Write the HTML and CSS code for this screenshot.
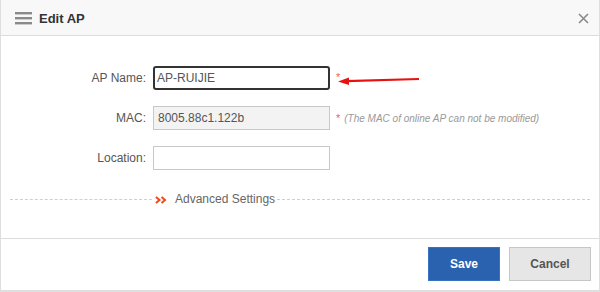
FILE: index.html
```html
<!DOCTYPE html>
<html>
<head>
<meta charset="utf-8">
<link rel="stylesheet" href="styles.css">
</head>
<body>
<div class="dialog">
  <div class="header">
    <svg class="menu" width="17" height="13" viewBox="0 0 17 13"><rect x="0" y="0" width="17" height="2.4" fill="#8a8a8a"/><rect x="0" y="5" width="17" height="2.4" fill="#8a8a8a"/><rect x="0" y="10" width="17" height="2.4" fill="#8a8a8a"/></svg>
    <span class="title">Edit AP</span>
    <svg class="close" width="11" height="11" viewBox="0 0 11 11"><path d="M1 1L10 10M10 1L1 10" stroke="#8a8a8a" stroke-width="1.6"/></svg>
  </div>
  <div class="body">
    <div class="row">
      <label class="lbl">AP Name:</label>
      <div class="input focus">AP-RUIJIE</div>
      <span class="star">*</span>
      <svg class="arrow" width="84" height="10" viewBox="0 0 84 10"><path d="M8 6.2L81 4" stroke="#e81010" stroke-width="2.2"/><path d="M0 6.5L11 2.5L11 10Z" fill="#e81010"/></svg>
    </div>
    <div class="row">
      <label class="lbl">MAC:</label>
      <div class="input disabled">8005.88c1.122b</div>
      <span class="star">*</span>
      <span class="note">(The MAC of online AP can not be modified)</span>
    </div>
    <div class="row">
      <label class="lbl">Location:</label>
      <div class="input"></div>
    </div>
    <div class="adv">
      <div class="dash left"></div>
      <div class="legend">
        <svg class="chev" width="12" height="8" viewBox="0 0 12 8"><path d="M1 1L4.5 4L1 7M6.5 1L10 4L6.5 7" stroke="#f04a1a" stroke-width="2" fill="none"/></svg>
        <span>Advanced Settings</span>
      </div>
      <div class="dash right"></div>
    </div>
  </div>
  <div class="footer">
    <button class="btn save">Save</button>
    <button class="btn cancel">Cancel</button>
  </div>
</div>
</body>
</html>
```
FILE: styles.css
```css
* { box-sizing: border-box; }
html, body { margin: 0; padding: 0; background: #fff; }
body { font-family: "Liberation Sans", Arial, sans-serif; width: 600px; height: 292px; overflow: hidden; }
.dialog {
  width: 600px;
  height: 292px;
  border: 1px solid #dedede;
  border-top: none;
  display: flex;
  flex-direction: column;
}
.header {
  height: 36px;
  background: #f8f8f8;
  border-bottom: 1px solid #dddddd;
  display: flex;
  align-items: center;
  padding: 0 10px 0 14px;
  flex: none;
}
.menu { display: block; margin-top: 1px; }
.title { font-size: 13px; font-weight: bold; color: #333; margin-left: 7px; margin-top: 1px; }
.close { margin-left: auto; margin-right: 0; margin-top: 1px; }
.body {
  position: relative;
  height: 203px;
  border-bottom: 1px solid #dddddd;
  padding-top: 30px;
  flex: none;
}
.row {
  display: flex;
  align-items: center;
  height: 24px;
  margin-bottom: 16px;
  position: relative;
}
.lbl {
  width: 145px;
  text-align: right;
  font-size: 12px;
  color: #555;
  padding-right: 0;
  margin-right: 7px;
}
.input {
  width: 177px;
  height: 24px;
  border: 1px solid #c8c8c8;
  font-size: 12px;
  color: #555;
  padding: 0 0 0 4px;
  line-height: 22px;
  background: #fff;
}
.input.focus {
  border: 2px solid #333;
  border-radius: 3px;
  line-height: 20px;
  padding-left: 2px;
}
.input.disabled { background: #f3f3f3; }
.star { color: #f06060; font-size: 11px; margin-left: 6px; }
.row:first-child .star { align-self: flex-start; margin-top: 5px; }
.note { font-size: 10px; font-style: italic; color: #999; margin-left: 4px; }
.arrow { position: absolute; left: 337px; top: 9px; }
.adv {
  display: flex;
  align-items: center;
  margin: 23px 9px 0 9px;
  height: 12px;
}
.dash { border-top: 1px dashed #cfcfcf; height: 0; }
.dash.left { width: 142px; }
.dash.right { flex: 1; }
.legend {
  display: flex;
  align-items: center;
  padding: 0 2px 0 3px;
  font-size: 12px;
  color: #666;
}
.chev { margin-right: 8px; margin-top: 2px; }
.footer {
  flex: 1;
  display: flex;
  justify-content: flex-end;
  align-items: flex-start;
  padding: 8px 8px 0 0;
  gap: 9px;
  border-bottom: 1px solid #dedede;
}
.btn {
  height: 34px;
  font-family: "Liberation Sans", Arial, sans-serif;
  font-size: 12px;
  font-weight: bold;
  border-radius: 0;
  cursor: pointer;
}
.save { width: 72px; background: #2a62b0; border: 1px solid #3873c2; color: #fff; }
.cancel { width: 82px; background: #e6e6e6; border: 1px solid #c6c6c6; color: #555; }
```
